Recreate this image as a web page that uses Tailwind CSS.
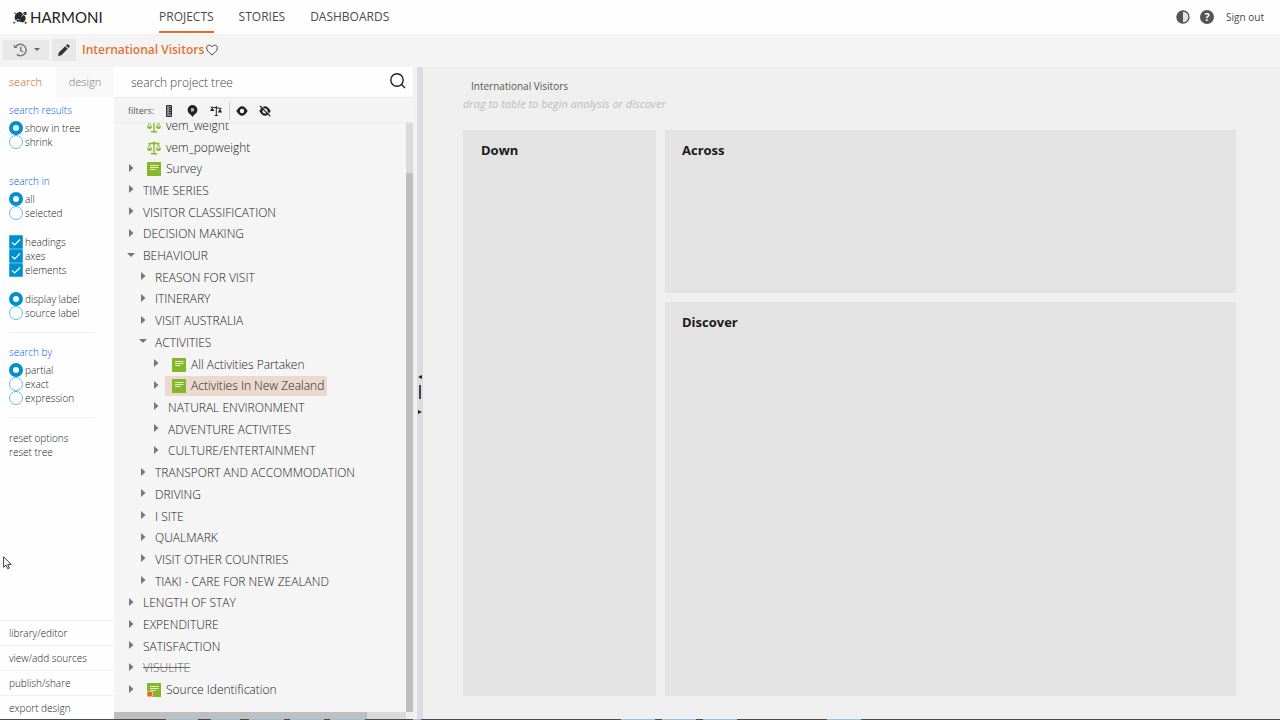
<!DOCTYPE html>
<html lang="en">
<head>
<meta charset="utf-8">
<title>Harmoni - International Visitors</title>
<script src="https://cdn.jsdelivr.net/npm/@tailwindcss/browser@4"></script>
</head>
<body class="h-screen flex flex-col overflow-hidden bg-[#efefef] font-['Open_Sans',sans-serif] text-[#555]">

<svg class="hidden">
  <defs>
    <symbol id="scale" viewBox="0 0 14 14"><g fill="none" stroke="#84b82a"><path d="M7 .5V12M1.500 2.500H12.500" stroke-width="1.300"/><path d="M2.500 3L.7 8M2.500 3L4.500 8M11.500 3L9.500 8M11.500 3L13.300 8" stroke-width=".8"/></g><path d="M0 7.500H5.200Q4.800 10 2.600 10Q.4 10 0 7.500ZM8.800 7.500H14Q13.600 10 11.400 10Q9.200 10 8.800 7.500ZM4 12H10V13.500H4ZM5.800 1H8.200V3.200H5.800Z" fill="#84b82a"/></symbol>
    <symbol id="doc" viewBox="0 0 14 14"><rect width="14" height="14" rx=".6" fill="#84b829"/><path d="M3 3.500H11.500M3 5.500H11.500M3 7.500H8.500" stroke="#e6f2cf" stroke-width="1"/></symbol>
    <symbol id="docdot" viewBox="0 0 14 14"><rect width="14" height="14" rx=".6" fill="#84b829"/><path d="M3 3.500H11.500M3 5.500H11.500M4 7.500H8.500" stroke="#e6f2cf" stroke-width="1"/><circle cx="2.800" cy="11" r="3.300" fill="#f4f4f4"/><circle cx="2.800" cy="11" r="2.700" fill="#f26322"/></symbol>
  </defs>
</svg>

<header class="h-[34px] shrink-0 flex items-center bg-[#fefefe] text-[#4a4a4a]">
  <a href="#" class="ml-[13px] w-[146px] h-full flex items-center gap-[3px] font-['Lato',sans-serif] text-[15px] text-[#222]">
    <svg class="w-[14px] h-[13px]" viewBox="0 0 14 13" fill="#2a2a2a"><path d="M6.500 1C9 .5 9.500 3 10.500 4C13 5 13.300 7.500 12 9.500C10.800 12 8.500 11.600 7 10.600C4.500 11.500 1.600 9.600 1.600 6.500C1.600 3.400 3.800 1.400 6.500 1Z"/><circle cx="12" cy="2.400" r="1.700"/><circle cx="1.300" cy="11.500" r="1.100"/><circle cx="12.600" cy="11.800" r="1"/><circle cx="2" cy="2.300" r=".8"/><path d="M1 11.500L4.500 8.300L6.500 8.800M8.500 5.500L11.500 2.700" stroke="#fff" stroke-width=".7" fill="none"/></svg>
    <span>HARMONI</span>
  </a>
  <nav class="h-full flex gap-[25px] text-[12px] font-medium">
    <a href="#" class="h-[33px] flex items-center border-b-2 border-[#ec6a23] pt-[2px]">PROJECTS</a>
    <a href="#" class="h-[33px] flex items-center border-b-2 border-transparent pt-[2px]">STORIES</a>
    <a href="#" class="h-[33px] flex items-center border-b-2 border-transparent pt-[2px]">DASHBOARDS</a>
  </nav>
  <div class="ml-auto mr-4 flex items-center gap-[10px] text-[10px]">
    <button aria-label="Contrast"><svg class="w-[14px] h-[14px] block" viewBox="0 0 14 14"><circle cx="7" cy="7" r="6" fill="#e4e4e4" stroke="#555" stroke-width="1.300"/><path d="M7 .7A6.300 6.300 0 0 0 7 13.300Z" fill="#555"/></svg></button>
    <button aria-label="Help" class="w-[14px] h-[14px] rounded-full bg-[#555] text-white text-[11px] leading-[14px] font-bold">?</button>
    <a href="#" class="ml-[2px]">Sign out</a>
  </div>
</header>

<div class="h-[33px] shrink-0 flex items-center bg-[#f4f4f4] pl-[3px] pb-[2px]">
  <button aria-label="History" class="w-[46px] h-5 bg-[#e8e8e8] flex items-center justify-center gap-[7px]">
    <svg class="w-[14px] h-[14px]" viewBox="0 0 14 14" fill="none" stroke="#777" stroke-width="1.400"><path d="M2.300 4.500A5.700 5.700 0 1 1 3.800 11.400"/><path d="M7.700 3.800V7.500L10 9"/><path d="M.5 1.500L1 5L4.600 4.800Z" fill="#777" stroke="none"/></svg>
    <svg class="w-[6px] h-[3px]" viewBox="0 0 6 3"><path d="M0 0H6L3 3Z" fill="#666"/></svg>
  </button>
  <button aria-label="Edit" class="ml-[3px] w-6 h-[22px] bg-[#e8e8e8] flex items-center justify-center">
    <svg class="w-3 h-3" viewBox="0 0 12 12" fill="#333"><path d="M0 12L.8 8.600L7.200 2.200L9.800 4.800L3.400 11.200ZM8 1.400L9.200.3Q9.700 0 10.200.4L11.600 1.800Q12 2.300 11.700 2.800L10.600 4Z"/></svg>
  </button>
  <h1 class="ml-[6px] text-[12px] font-semibold text-[#e5712f]">International Visitors</h1>
  <button aria-label="Favourite" class="ml-[2px]"><svg class="w-3 h-3 block" viewBox="0 0 12 12"><path d="M6 11C3 8.400.6 6.500.6 3.800C.6 1 4 .2 6 2.800C8 .2 11.400 1 11.400 3.800C11.400 6.500 9 8.400 6 11Z" fill="none" stroke="#444" stroke-width="1"/></svg></button>
</div>

<div class="flex-1 min-h-0 flex">
  <aside class="w-[114px] shrink-0 flex flex-col bg-[#fefefe] text-[10px] leading-[14px] font-light text-[#222]">
    <div class="h-[30px] shrink-0 flex text-[11px]">
      <button class="w-14 text-left pl-[9px] text-[#e0560a]">search</button>
      <button class="flex-1 bg-[#f8f8f8] text-[#777]">design</button>
    </div>
    <form class="pt-1 px-[9px]">
      <h2 class="h-[18px] leading-[18px] mb-[2px] text-[#0060e8]">search results</h2>
      <label class="h-[14px] flex items-center gap-[2px]"><input type="radio" name="results" checked class="appearance-none w-[14px] h-[14px] rounded-full border border-[#5dbdf0] checked:border-4 checked:border-[#0090d0] bg-white">show in tree</label>
      <label class="h-[14px] flex items-center gap-[2px]"><input type="radio" name="results" class="appearance-none w-[14px] h-[14px] rounded-full border border-[#5dbdf0] checked:border-4 checked:border-[#0090d0] bg-white">shrink</label>

      <h2 class="mt-[23px] h-[18px] leading-[18px] mb-[2px] text-[#0060e8]">search in</h2>
      <label class="h-[14px] flex items-center gap-[2px]"><input type="radio" name="scope" checked class="appearance-none w-[14px] h-[14px] rounded-full border border-[#5dbdf0] checked:border-4 checked:border-[#0090d0] bg-white">all</label>
      <label class="h-[14px] flex items-center gap-[2px]"><input type="radio" name="scope" class="appearance-none w-[14px] h-[14px] rounded-full border border-[#5dbdf0] checked:border-4 checked:border-[#0090d0] bg-white">selected</label>

      <label class="mt-[15px] h-[14px] flex items-center gap-[2px]"><span class="grid"><input type="checkbox" checked class="[grid-area:1/1] appearance-none w-[14px] h-[14px] rounded-[1px] border border-[#33a8dc] checked:bg-[#0090d0]"><svg class="[grid-area:1/1] w-[14px] h-[14px] pointer-events-none" viewBox="0 0 14 14"><path d="M3 7.500L5.700 10L11 4.500" fill="none" stroke="#fff" stroke-width="1.200"/></svg></span>headings</label>
      <label class="h-[14px] flex items-center gap-[2px]"><span class="grid"><input type="checkbox" checked class="[grid-area:1/1] appearance-none w-[14px] h-[14px] rounded-[1px] border border-[#33a8dc] checked:bg-[#0090d0]"><svg class="[grid-area:1/1] w-[14px] h-[14px] pointer-events-none" viewBox="0 0 14 14"><path d="M3 7.500L5.700 10L11 4.500" fill="none" stroke="#fff" stroke-width="1.200"/></svg></span>axes</label>
      <label class="h-[14px] flex items-center gap-[2px]"><span class="grid"><input type="checkbox" checked class="[grid-area:1/1] appearance-none w-[14px] h-[14px] rounded-[1px] border border-[#33a8dc] checked:bg-[#0090d0]"><svg class="[grid-area:1/1] w-[14px] h-[14px] pointer-events-none" viewBox="0 0 14 14"><path d="M3 7.500L5.700 10L11 4.500" fill="none" stroke="#fff" stroke-width="1.200"/></svg></span>elements</label>

      <label class="mt-[15px] h-[14px] flex items-center gap-[2px]"><input type="radio" name="labels" checked class="appearance-none w-[14px] h-[14px] rounded-full border border-[#5dbdf0] checked:border-4 checked:border-[#0090d0] bg-white">display label</label>
      <label class="h-[14px] flex items-center gap-[2px]"><input type="radio" name="labels" class="appearance-none w-[14px] h-[14px] rounded-full border border-[#5dbdf0] checked:border-4 checked:border-[#0090d0] bg-white">source label</label>

      <hr class="mt-3 mr-[10px] border-[#f0f0f0]">
      <h2 class="mt-[10px] h-[18px] leading-[18px] mb-[2px] text-[#0060e8]">search by</h2>
      <label class="h-[14px] flex items-center gap-[2px]"><input type="radio" name="by" checked class="appearance-none w-[14px] h-[14px] rounded-full border border-[#5dbdf0] checked:border-4 checked:border-[#0090d0] bg-white">partial</label>
      <label class="h-[14px] flex items-center gap-[2px]"><input type="radio" name="by" class="appearance-none w-[14px] h-[14px] rounded-full border border-[#5dbdf0] checked:border-4 checked:border-[#0090d0] bg-white">exact</label>
      <label class="h-[14px] flex items-center gap-[2px]"><input type="radio" name="by" class="appearance-none w-[14px] h-[14px] rounded-full border border-[#5dbdf0] checked:border-4 checked:border-[#0090d0] bg-white">expression</label>

      <hr class="mt-3 mb-[13px] mr-[10px] border-[#f0f0f0]">
      <button type="reset" class="block">reset options</button>
      <button type="button" class="block">reset tree</button>
    </form>
    <nav class="mt-auto -mb-px">
      <a href="#" class="h-[25px] flex items-center pl-[9px] border-t border-[#f0f0f5]">library/editor</a>
      <a href="#" class="h-[25px] flex items-center pl-[9px] border-t border-[#f0f0f5]">view/add sources</a>
      <a href="#" class="h-[25px] flex items-center pl-[9px] border-t border-[#f0f0f5]">publish/share</a>
      <a href="#" class="h-[25px] flex items-center pl-[9px] border-t border-[#f0f0f5]">export design</a>
    </nav>
  </aside>

  <section class="w-[299px] shrink-0 flex flex-col bg-[#f5f5f5]">
    <div class="h-[30px] shrink-0 flex items-center bg-[#fefefe] pl-[17px] pr-[7px]">
      <input type="text" aria-label="Search project tree" placeholder="search project tree" class="flex-1 min-w-0 pt-px text-[12px] font-light outline-none placeholder:text-[#444]">
      <button aria-label="Search"><svg class="w-4 h-4 mb-[2px] block" viewBox="0 0 16 16" fill="none" stroke="#222"><circle cx="7" cy="7" r="6.200" stroke-width="1.400"/><path d="M11.500 11.500L15 15" stroke-width="1.400"/></svg></button>
    </div>
    <div class="h-[26px] shrink-0 flex items-center border-y border-[#ebebeb] bg-[#f4f4f4] pl-[14px] pt-[2px]">
      <span class="w-[35px] text-[9px] font-medium">filters:</span>
      <button aria-label="Ruler" class="w-[12px] flex justify-center"><svg class="w-[6px] h-3" viewBox="0 0 6 12"><path d="M.5.5H5.500V11.500H.5Z" fill="#888" stroke="#333"/><path d="M3 2.500H5M3 4.500H5M3 6.500H5M3 8.500H5" stroke="#222" stroke-width=".9"/></svg></button>
      <button aria-label="Pin" class="ml-[12px] w-[11px]"><svg class="w-[11px] h-3 block" viewBox="0 0 11 12"><path d="M5.500 12L4 10C1.500 8.500 .6 7 .6 4.800A4.900 4.700 0 0 1 10.400 4.800C10.400 7 9.500 8.500 7 10Z" fill="#222"/><path d="M4 3.200H7V6.300H5.500L4.500 7.300V6.300H4Z" fill="#bbb"/></svg></button>
      <button aria-label="Weights" class="ml-[12px] w-3"><svg class="w-3 h-3 block" viewBox="0 0 12 12"><path d="M.5 2L11.500 3.500M6.300 1V10.500M4.800 10.500H7.800" fill="none" stroke="#222"/><path d="M0 6L2.200 2.500L4.400 6ZM7.800 7.500L10 3.500L12 7.500Z" fill="#222"/></svg></button>
      <span class="ml-[7px] w-px h-[18px] bg-[#ccc]"></span>
      <button aria-label="Show" class="ml-[6px]"><svg class="w-3 h-3 block" viewBox="0 0 12 12"><path d="M.3 6Q3 1.300 6 1.300T11.700 6Q9 10.700 6 10.700T.3 6Z" fill="#222"/><circle cx="6" cy="6" r="2.200" fill="#f4f4f4"/></svg></button>
      <button aria-label="Hide" class="ml-[11px]"><svg class="w-3 h-3 block" viewBox="0 0 12 12"><path d="M.3 6Q3 1.300 6 1.300T11.700 6Q9 10.700 6 10.700T.3 6Z" fill="#222"/><circle cx="6" cy="6" r="2.500" fill="#f4f4f4"/><path d="M2 .7L12 10.700" stroke="#f4f4f4"/><path d="M1 1L11.300 11.300" stroke="#222" stroke-width="1.200"/></svg></button>
    </div>
    <div class="flex-1 min-h-0 flex">
      <ul id="tree" class="flex-1 min-w-0 -mt-2 pb-[11px] flex flex-col text-[12px] font-light text-[#222] whitespace-nowrap [clip-path:inset(8px_0_0_0)]"></ul>
      <div class="w-[7px] bg-[#dadada] pt-[50px] flex"><div class="flex-1 bg-[#bfbfbf]"></div></div>
    </div>
    <div class="h-[7px] shrink-0 pr-[7px] flex bg-[#eee]"><div class="flex-1 bg-[#dadada]"><div class="h-full w-[253px] bg-[#bfbfbf]"></div></div></div>
  </section>

  <div class="w-[10px] shrink-0 border-l-4 border-[#f1f1f1] bg-[#dcdce0] flex flex-col items-center justify-center gap-[6px] pt-[2px]">
    <svg class="mr-px w-1 h-1" viewBox="0 0 4 4"><path d="M4 0V4L0 2Z" fill="#222"/></svg>
    <span class="w-[2px] h-[14px] bg-[#444]"></span>
    <svg class="mt-[5px] w-1 h-1" viewBox="0 0 4 4"><path d="M0 0V4L4 2Z" fill="#222"/></svg>
  </div>

  <main class="flex-1 min-w-0 flex flex-col pt-[11px] pl-10 pr-11 pb-[23px]">
    <h2 class="pl-2 text-[10px] leading-4">International Visitors</h2>
    <p class="mt-px mb-[17px] text-[11px] leading-[18px] italic text-[#bbb]">drag to table to begin analysis or discover</p>
    <div class="flex-1 grid grid-cols-[193px_1fr] grid-rows-[163fr_394fr] gap-x-[9px] gap-y-[9px] text-[13px] font-bold text-[#1a1a1a]">
      <div class="row-span-2 bg-[#e3e3e3] pl-[18px] pt-[11px]">Down</div>
      <div class="bg-[#e3e3e3] pl-[17px] pt-[11px]">Across</div>
      <div class="bg-[#e3e3e3] pl-[17px] pt-[11px]">Discover</div>
    </div>
  </main>
</div>

<div class="h-px shrink-0 flex bg-[#4a4a4a]">
  <span class="ml-[166px] w-8 bg-[#8fc3e8]"></span>
  <span class="ml-[13px] w-[29px] bg-[#8fc3e8]"></span>
  <span class="ml-[9px] w-[35px] bg-[#8fc3e8]"></span>
  <span class="ml-[6px] w-[34px] bg-[#8fc3e8]"></span>
  <span class="ml-[6px] w-[35px] bg-[#8fc3e8]"></span>
  <span class="ml-[48px] w-[8px] bg-[#8fc3e8]"></span>
  <span class="ml-[200px] w-[34px] bg-[#8fc3e8]"></span>
  <span class="ml-[7px] w-[34px] bg-[#8fc3e8]"></span>
  <span class="ml-[7px] w-[34px] bg-[#8fc3e8]"></span>
  <span class="ml-[90px] w-[34px] bg-[#8fc3e8]"></span>
</div>

<svg class="absolute left-[3px] top-[556px] w-[9px] h-[14px]" viewBox="0 0 9 14"><path d="M.6.8V11.300L3 9L4.700 12.700L6.300 12L4.700 8.400H8.200Z" fill="#fff" stroke="#222" stroke-width=".9"/></svg>

<script>
// Each row: indent level, arrow (c = closed, o = open, - = none), icon, label, row state
const rows = [
  [0,'-','scale','vem_weight'],[0,'-','scale','vem_popweight'],[0,'c','doc','Survey'],
  [0,'c','','TIME SERIES'],[0,'c','','VISITOR CLASSIFICATION'],[0,'c','','DECISION MAKING'],[0,'o','','BEHAVIOUR'],
  [1,'c','','REASON FOR VISIT'],[1,'c','','ITINERARY'],[1,'c','','VISIT AUSTRALIA'],[1,'o','','ACTIVITIES'],
  [2,'c','doc','All Activities Partaken'],[2,'c','doc','Activities In New Zealand','selected'],
  [2,'c','','NATURAL ENVIRONMENT'],[2,'c','','ADVENTURE ACTIVITES'],[2,'c','','CULTURE/ENTERTAINMENT'],
  [1,'c','','TRANSPORT AND ACCOMMODATION'],[1,'c','','DRIVING'],[1,'c','','I SITE'],[1,'c','','QUALMARK'],
  [1,'c','','VISIT OTHER COUNTRIES'],[1,'c','','TIAKI - CARE FOR NEW ZEALAND'],
  [0,'c','','LENGTH OF STAY'],[0,'c','','EXPENDITURE'],[0,'c','','SATISFACTION'],[0,'c','','VISULITE','removed'],
  [0,'c','docdot','Source Identification']
];
const indent = ['pl-[13px]','pl-[25px]','pl-[38px]'];
const arrows = {
  c:'<svg class="w-[8px] h-[8px] mb-[3px]" viewBox="0 0 8 8"><path d="M2 0L6.500 4L2 8Z" fill="#777"/></svg>',
  o:'<svg class="w-[8px] h-[8px] mb-[3px]" viewBox="0 0 8 8"><path d="M0 2H8L4 6Z" fill="#777"/></svg>',
  '-':'<span class="w-[8px]"></span>'
};
document.getElementById('tree').innerHTML = rows.map(([lvl,a,icon,text,state]) =>
  `<li class="flex-1 min-h-0 flex items-center ${indent[lvl]}"><button class="flex w-[8px] mr-[5px]" aria-label="Toggle ${text}">${arrows[a]}</button>` +
  `<a href="#" class="h-[20px] flex items-center gap-[5px] rounded-[1px] px-[3px] ${icon ? 'pl-[7px]' : ''} ${state === 'selected' ? 'bg-[#ecd9cd]' : ''} ${state === 'removed' ? 'line-through text-[#666]' : ''}">` +
  (icon ? `<svg class="w-[14px] h-[14px]"><use href="#${icon}"/></svg>` : '') + `<span>${text}</span></a></li>`).join('');
</script>
</body>
</html>
